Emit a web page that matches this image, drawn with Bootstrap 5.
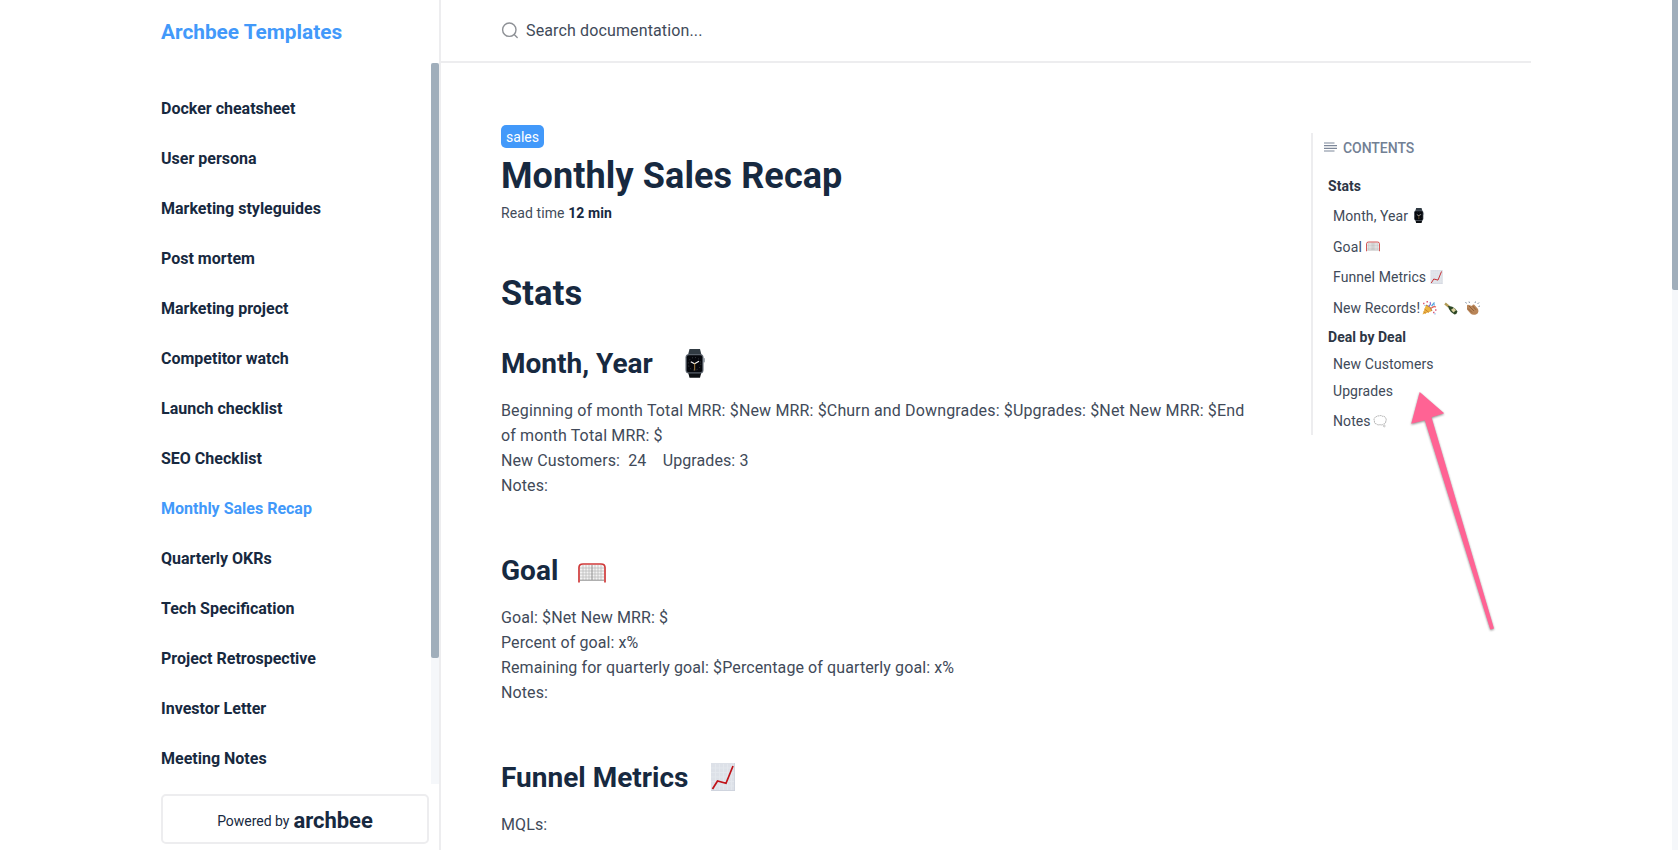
<!DOCTYPE html>
<html lang="en">
<head>
  <meta charset="UTF-8">
  <meta name="viewport" content="width=device-width, initial-scale=1.0">
  <title>Monthly Sales Recap</title>
  <!-- Bootstrap CSS -->
  <link href="https://cdn.jsdelivr.net/npm/bootstrap@5.3.0/dist/css/bootstrap.min.css" rel="stylesheet">
  <style>
    body {
      font-family: Roboto, sans-serif;
      font-size: 16px;
      line-height: 25px;
      letter-spacing: .1px;
      color: #414a59;
      height: 850px;
      overflow: hidden;
    }
    a { text-decoration: none; }
    svg { flex: none; }

    /* Sidebar */
    .sidebar {
      width: 441px;
      padding-left: 161px;
      border-right: 2px solid #ededef;
    }
    .brand {
      height: 63px;
      padding-top: 2px;
      font-size: 20.8px;
      font-weight: 700;
      letter-spacing: 0;
      color: #4299fa;
    }
    .doc-list {
      height: 721px;
      padding-top: 20px;
      overflow: hidden;
    }
    .doc-list a {
      height: 50px;
      padding: 0;
      color: #172940;
      font-weight: 700;
      letter-spacing: 0;
    }
    .doc-list a.active {
      color: #4299fa;
      background: none;
    }
    .side-track {
      width: 8px;
      height: 721px;
      background: #f5f7fa;
    }
    .side-thumb {
      height: 595px;
      border-radius: 2px;
      background: #a0aebb;
    }
    .powered {
      width: 268px;
      height: 50px;
      margin-top: 10px;
      border: 2px solid #ededef;
      border-radius: 5px;
      color: #172940;
      font-size: 14px;
      letter-spacing: -.02px;
    }
    .powered span { padding-top: 4px; }
    .powered strong { padding-top: 3px; font-size: 22px; }

    /* Main column */
    .main-col { width: 1090px; }
    .search-bar {
      height: 63px;
      padding-left: 60px;
      border-bottom: 2px solid #ededef;
      letter-spacing: .13px;
    }
    .search-icon { margin-right: 7px; }
    .article {
      width: 750px;
      margin-left: 60px;
      padding-top: 62px;
    }
    .tag {
      height: 23px;
      width: 43px;
      border-radius: 5px;
      background: #4299fa;
      color: #fff;
      font-size: 14px;
      line-height: 24px;
      letter-spacing: 0;
    }
    .article h1, .article h2, .article h3 {
      margin: 0;
      color: #172940;
      font-weight: 700;
      letter-spacing: 0;
    }
    .article h1 { font-size: 36px; line-height: 48px; padding-top: 4px; letter-spacing: .1px; }
    .article h2 { font-size: 34.5px; line-height: 48px; margin-top: 46px; letter-spacing: .1px; }
    .article h3 { font-size: 28px; line-height: 40px; margin-bottom: 14px; }
    .article .month-head { margin-top: 27px; }
    .article .section-head { margin-top: 53px; }
    .read-time { font-size: 14px; line-height: 20px; margin-top: 3px; }
    .read-time strong { color: #172940; }
    .totals { letter-spacing: .15px; }
    .watch-icon { margin: -2px 0 0 32px; }
    .goal-icon { margin: 4px 0 0 20px; }
    .chart-icon { margin: -2px 0 0 23px; }

    /* Contents */
    .toc {
      width: 220px;
      height: 302px;
      margin: 70px 0 0 60px;
      border-left: 2px solid #ededef;
      font-size: 14px;
      letter-spacing: .08px;
    }
    .toc-title {
      height: 30px;
      padding: 2px 0 0 11px;
      color: #728094;
      font-weight: 500;
      letter-spacing: -.05px;
    }
    .toc-title svg { margin-top: -3px; }
    .toc-label { margin-left: 6px; }
    .toc a { color: #414a59; }
    .toc .top-item {
      height: 27px;
      padding: 1px 0 0 15px;
      font-weight: 700;
      letter-spacing: .04px;
      color: #2d3645;
    }
    .toc .first-item { margin-top: 10px; }
    .toc .sub-item { height: 27px; padding: 2px 0 0 20px; }
    .toc .tall { height: 31px; }
    .toc .last-item { padding-top: 4px; }
    .toc-gap { margin-left: 7px; }
    .toc-near { margin-left: 2px; }
    .toc .sub-item svg { margin-top: -1px; }

    /* Page scrollbar */
    .page-track { width: 6px; height: 850px; background: #f5f7fa; }
    .page-thumb { height: 290px; background: #a0aebb; border-radius: 0 0 0 2px; }

    .pointer { left: 1400px; top: 382px; filter: drop-shadow(0 1px 1px rgba(0, 0, 0, .45)); }
  </style>
</head>
<body class="d-flex justify-content-between bg-white">

  <!-- Emoji symbols -->
  <svg class="d-none">
    <symbol id="watch" viewBox="0 0 20 29">
      <path d="M4.500 0h10.500l1.500 6h-13.500z" fill="#313b43"/>
      <path d="M3 23h13.500l-1.500 5.800h-10.500z" fill="#0b0e12"/>
      <rect x=".5" y="5" width="18" height="19.500" rx="3.500" fill="#59616b"/>
      <rect x="18.300" y="9" width="1.500" height="4.500" rx=".7" fill="#8b949d"/>
      <rect x="1.800" y="6.300" width="15.400" height="17" rx="2" fill="#05070c"/>
      <circle cx="9.500" cy="14.800" r="6.300" fill="none" stroke="#69717a" stroke-width=".7" stroke-dasharray=".8 2.500"/>
      <path d="M9.500 14.800L5.800 12.800M9.500 14.800L14 12.300" stroke="#f4f4f4" stroke-width="1.100"/>
      <path d="M9.700 14v7.500" stroke="#d3a24e" stroke-width=".8"/>
    </symbol>
    <symbol id="goal" viewBox="0 0 28 20">
      <path d="M2 17.500V4q0-2 2-2.500h20q2 .5 2 2.500v13.500" fill="#f3f3f3"/>
      <path d="M5 2v15M8 2v15M11 2v15M17 2v15M20 2v15M23 2v15M2 5h24M2 8h24M2 11h24M2 14h24" stroke="#b5b5b5" stroke-width=".7"/>
      <path d="M14 2v15M2 17.200h24" stroke="#8f8f8f" stroke-width="1"/>
      <path d="M1 19.500V4.500Q1 1 5 1h18q4 0 4 3.500v15" fill="none" stroke="#cf3a3a" stroke-width="1.700"/>
    </symbol>
    <symbol id="chart" viewBox="0 0 24 28">
      <rect width="24" height="28" fill="#dde1e8"/>
      <path d="M4.500 1v26M8.500 1v26M12.500 1v26M16.500 1v26M20.500 1v26M0 5h24M0 9.500h24M0 14h24M0 18.500h24M0 23h24" stroke="#e5e8ee" stroke-width=".8"/>
      <path d="M0 27.500h24M23.600 0v28" stroke="#cbd0da" stroke-width=".8"/>
      <path d="M1.500 26l5-8 8.500 2.200L22 3" fill="none" stroke="#c01218" stroke-width="1.700"/>
    </symbol>
    <symbol id="party" viewBox="0 0 15 14">
      <path d="M.5 13.500L4 4q4.500 1 6 6z" fill="#edb441"/>
      <path d="M2.500 8l4.500 3.500M1.600 10.800l2.400 1.500" stroke="#c27a2d" stroke-width=".9"/>
      <path d="M4 4q5 1 6 6" fill="none" stroke="#9b6b32" stroke-width=".8"/>
      <path d="M6.500 5.500q3-2 1.500-4.500" fill="none" stroke="#8470d6" stroke-width="1.200"/>
      <path d="M9 7.500q2-2.500 5-1.500" fill="none" stroke="#e2574c" stroke-width="1.200"/>
      <path d="M9.500 5l3-3.500" stroke="#53a6dc" stroke-width="1.200"/>
      <path d="M1 2.500h1.500M4.500.8H6M11 11.500h1.500M13 9h1.500" stroke="#dc5c7d" stroke-width="1.400"/>
      <path d="M11.500 3.800h1.500M2.500 4.500h1M12.500 12.800h1" stroke="#6aa7e8" stroke-width="1.200"/>
    </symbol>
    <symbol id="bottle" viewBox="0 0 14 13">
      <path d="M1 1.500l4 3.200" stroke="#b29b55" stroke-width="2.400"/>
      <path d="M4 4q4-.5 7 2.500l2.500 3q-.5 2.500-3 3l-3.500-2.500Q4.500 7.500 4 4z" fill="#2c4724"/>
      <path d="M7 7.800l3-2 2 2.500-2.600 2.200z" fill="#d7cf9d"/>
    </symbol>
    <symbol id="clap" viewBox="0 0 15 14">
      <path d="M2 5q0-2 2-1l3 1q1.500-2.500 3-.5l3 3.500q1.500 4-2 5.500-3.500 1-5.500-1L2 8.500z" fill="#b98558"/>
      <path d="M4 5l5 5M3 7.500l4 4M7.500 4.800l3.500 4" stroke="#855834" stroke-width=".8"/>
      <path d="M1.500 2.500L.5 1M4.500 2L4 .5M10 2l.5-1.500M12.500 3L14 1.500M13.500 5.500L15 5" stroke="#74879a" stroke-width=".9"/>
    </symbol>
    <symbol id="thought" viewBox="0 0 14 13">
      <path d="M3 2q1.500-1.500 3-1 2-1 3.500.3Q12 1 12.500 3q1.300 1.500.3 3 0 2.800-2.300 3-1.500 1.500-3.500.6-2 .8-3.500-.6Q1 8.500 1.500 6q-1-2 .2-3Q2 2 3 2z" fill="#fff" stroke="#a4a4a4" stroke-width=".9" stroke-dasharray="1.500 .5"/>
      <circle cx="11.300" cy="11" r=".9" fill="none" stroke="#a4a4a4" stroke-width=".6"/>
    </symbol>
  </svg>

  <div class="d-flex">
    <!-- Sidebar -->
    <aside class="sidebar">
      <a href="#" class="brand d-flex align-items-center">Archbee Templates</a>
      <div class="d-flex justify-content-between">
        <nav class="doc-list nav flex-column flex-nowrap">
          <a class="nav-link d-flex align-items-center" href="#">Docker cheatsheet</a>
          <a class="nav-link d-flex align-items-center" href="#">User persona</a>
          <a class="nav-link d-flex align-items-center" href="#">Marketing styleguides</a>
          <a class="nav-link d-flex align-items-center" href="#">Post mortem</a>
          <a class="nav-link d-flex align-items-center" href="#">Marketing project</a>
          <a class="nav-link d-flex align-items-center" href="#">Competitor watch</a>
          <a class="nav-link d-flex align-items-center" href="#">Launch checklist</a>
          <a class="nav-link d-flex align-items-center" href="#">SEO Checklist</a>
          <a class="nav-link d-flex align-items-center active" href="#">Monthly Sales Recap</a>
          <a class="nav-link d-flex align-items-center" href="#">Quarterly OKRs</a>
          <a class="nav-link d-flex align-items-center" href="#">Tech Specification</a>
          <a class="nav-link d-flex align-items-center" href="#">Project Retrospective</a>
          <a class="nav-link d-flex align-items-center" href="#">Investor Letter</a>
          <a class="nav-link d-flex align-items-center" href="#">Meeting Notes</a>
        </nav>
        <div class="side-track"><div class="side-thumb"></div></div>
      </div>
      <a href="#" class="powered d-flex justify-content-center align-items-center"><span class="me-1">Powered by</span> <strong>archbee</strong></a>
    </aside>

    <!-- Main -->
    <main class="main-col">
      <div class="search-bar d-flex align-items-center">
        <svg class="search-icon" width="18" height="18" viewBox="0 0 18 18" fill="none" stroke="#8e9196" stroke-width="1.400" stroke-linecap="round"><circle cx="8.300" cy="7.700" r="6.700"/><path d="M13.200 12.600l3 3"/></svg>
        <span>Search documentation...</span>
      </div>

      <div class="d-flex align-items-start">
        <article class="article">
          <div class="tag text-center">sales</div>
          <h1>Monthly Sales Recap</h1>
          <div class="read-time">Read time <strong>12 min</strong></div>

          <h2>Stats</h2>

          <h3 class="d-flex align-items-center month-head">Month, Year <svg class="watch-icon" width="20" height="29"><use href="#watch"/></svg></h3>
          <div class="totals">Beginning of month Total MRR: $New MRR: $Churn and Downgrades: $Upgrades: $Net New MRR: $End of month Total MRR: $</div>
          <div>New Customers: &nbsp;24 &nbsp;&nbsp; Upgrades: 3</div>
          <div>Notes:</div>

          <h3 class="d-flex align-items-center section-head">Goal <svg class="goal-icon" width="28" height="20"><use href="#goal"/></svg></h3>
          <div>Goal: $Net New MRR: $</div>
          <div>Percent of goal: x%</div>
          <div>Remaining for quarterly goal: $Percentage of quarterly goal: x%</div>
          <div>Notes:</div>

          <h3 class="d-flex align-items-center section-head">Funnel Metrics <svg class="chart-icon" width="24" height="28"><use href="#chart"/></svg></h3>
          <div>MQLs:</div>
        </article>

        <!-- Contents -->
        <nav class="toc d-flex flex-column">
          <div class="toc-title d-flex align-items-center">
            <svg width="13" height="10" viewBox="0 0 13 10" stroke="#7d8799" stroke-width="1.200"><path d="M0 1h10.500M0 3.700h13M0 6.300h13M0 9h10.500"/></svg>
            <span class="toc-label">CONTENTS</span>
          </div>
          <a href="#" class="top-item first-item d-flex align-items-center">Stats</a>
          <a href="#" class="sub-item tall d-flex align-items-center">Month, Year<svg class="ms-1" width="14" height="15"><use href="#watch"/></svg></a>
          <a href="#" class="sub-item tall d-flex align-items-center">Goal<svg class="ms-1" width="14" height="11"><use href="#goal"/></svg></a>
          <a href="#" class="sub-item tall d-flex align-items-center">Funnel Metrics<svg class="ms-1" width="13" height="14"><use href="#chart"/></svg></a>
          <a href="#" class="sub-item tall d-flex align-items-center">New Records!<svg class="toc-near" width="15" height="14"><use href="#party"/></svg><svg class="toc-gap" width="14" height="13"><use href="#bottle"/></svg><svg class="toc-gap" width="15" height="14"><use href="#clap"/></svg></a>
          <a href="#" class="top-item d-flex align-items-center">Deal by Deal</a>
          <a href="#" class="sub-item d-flex align-items-center">New Customers</a>
          <a href="#" class="sub-item d-flex align-items-center">Upgrades</a>
          <a href="#" class="sub-item tall last-item d-flex align-items-center">Notes<svg class="toc-near" width="14" height="13"><use href="#thought"/></svg></a>
        </nav>
      </div>
    </main>
  </div>

  <div class="page-track"><div class="page-thumb"></div></div>

  <!-- Annotation arrow -->
  <svg class="pointer position-absolute" width="110" height="260" viewBox="1400 382 110 260">
    <path d="M1419.700 392L1444.200 413.300L1431.500 417.200L1494 628.500L1490.300 629.600L1424.800 420.300L1411.200 423.800Z" fill="#ff6394"/>
  </svg>

  <!-- Bootstrap JS -->
  <script src="https://cdn.jsdelivr.net/npm/bootstrap@5.3.0/dist/js/bootstrap.bundle.min.js"></script>
</body>
</html>
